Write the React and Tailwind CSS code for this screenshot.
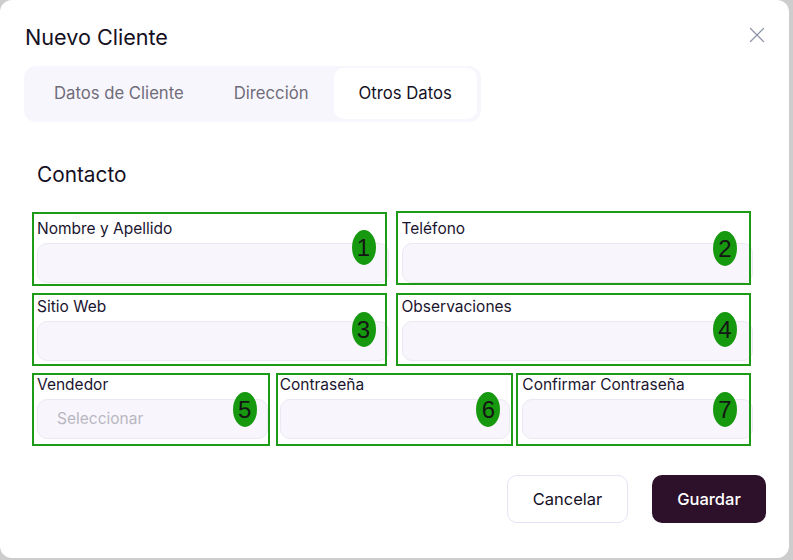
import { X } from "lucide-react";

const tabs = ["Datos de Cliente", "Dirección", "Otros Datos"];

// marcador numerado + recuadro verde alrededor de cada campo
const Field = ({ label, n, placeholder, boxClass, badgeClass }) => (
  <div className="relative flex flex-col">
    <label className="mb-[4px] text-[15.5px] leading-[20px] text-[#1b1530]">{label}</label>
    <div className="flex h-[40px] items-center rounded-[10px] border border-[#ebe8f2] bg-[#f8f6fc] px-[19px] text-[15.5px] text-[#b9b6c2]">
      {placeholder}
    </div>
    <span className={`pointer-events-none absolute border-2 border-[#1d9a16] ${boxClass}`} />
    <span
      className={`absolute flex h-[35px] w-[24px] items-center justify-center rounded-[50%] bg-[#16980f] font-['Liberation_Sans',sans-serif] text-[24px] leading-none text-[#151515] ${badgeClass}`}
    >
      {n}
    </span>
  </div>
);

export default function App() {
  return (
    <div className="h-[560px] w-[793px] bg-[#cdcdcd] font-['Inter',sans-serif]">
      <div className="flex h-[558px] w-[789px] flex-col rounded-xl bg-white">
        {/* cabecera */}
        <div className="flex items-start justify-between pl-[25px] pr-[19px] pt-[23px]">
          <h2 className="text-[21.6px] leading-[28px] text-[#15101f]">Nuevo Cliente</h2>
          <button type="button" className="-mt-[1px] text-[#8b93a7]">
            <X size={26} strokeWidth={1.1} />
          </button>
        </div>

        {/* pestañas */}
        <div className="ml-[24px] mt-[15px] flex w-fit rounded-[12px] bg-[#f8f6fd] pb-[3px] pl-[5px] pr-[4px] pt-[2px]">
          {tabs.map((t, i) => (
            <div
              key={t}
              className={`flex h-[51px] items-center rounded-[10px] px-[25px] pt-[1px] text-[16.7px] ${
                i === 2 ? "bg-white text-[#14101f]" : "text-[#6f6c7a]"
              }`}
            >
              {t}
            </div>
          ))}
        </div>

        <div className="px-[37px]">
          <h3 className="mt-[39px] text-[20.8px] leading-[28px] text-[#15101f]">Contacto</h3>

          <div className="mt-[30px] flex w-[716px] flex-col gap-y-[14px]">
            <div className="grid grid-cols-2 gap-x-[13px]">
              <Field
                label="Nombre y Apellido"
                n="1"
                boxClass="-left-[5px] right-[2px] -top-[7px] -bottom-[3px]"
                badgeClass="right-[13px] top-[11px]"
              />
              <Field
                label="Teléfono"
                n="2"
                boxClass="-left-[6px] right-[2px] -top-[8px] -bottom-[2px]"
                badgeClass="right-[16px] top-[12px]"
              />
            </div>
            <div className="grid grid-cols-2 gap-x-[13px]">
              <Field
                label="Sitio Web"
                n="3"
                boxClass="-left-[5px] right-[2px] -top-[4px] -bottom-[5px]"
                badgeClass="right-[13px] top-[15px]"
              />
              <Field
                label="Observaciones"
                n="4"
                boxClass="-left-[6px] right-[2px] -top-[4px] -bottom-[5px]"
                badgeClass="right-[16px] top-[15px]"
              />
            </div>
            <div className="grid grid-cols-3 gap-x-[12px]">
              <Field
                label="Vendedor"
                n="5"
                placeholder="Seleccionar"
                boxClass="-left-[5px] -right-[2px] -top-[2px] -bottom-[7px]"
                badgeClass="right-[11px] top-[17px]"
              />
              <Field
                label="Contraseña"
                n="6"
                boxClass="-left-[4px] -right-[3px] -top-[2px] -bottom-[7px]"
                badgeClass="right-[10px] top-[17px]"
              />
              <Field
                label="Confirmar Contraseña"
                n="7"
                boxClass="-left-[6px] right-[2px] -top-[2px] -bottom-[7px]"
                badgeClass="right-[16px] top-[17px]"
              />
            </div>
          </div>
        </div>

        {/* acciones */}
        <div className="mt-[36px] flex justify-end gap-[24px] pr-[23px]">
          <button
            type="button"
            className="h-[48px] w-[121px] rounded-[10px] border border-[#e6e2f7] bg-white text-[16.5px] text-[#15101f]"
          >
            Cancelar
          </button>
          <button
            type="button"
            className="h-[48px] w-[114px] rounded-[10px] bg-[#2d112b] text-[16.5px] font-medium text-white"
          >
            Guardar
          </button>
        </div>
      </div>
    </div>
  );
}
